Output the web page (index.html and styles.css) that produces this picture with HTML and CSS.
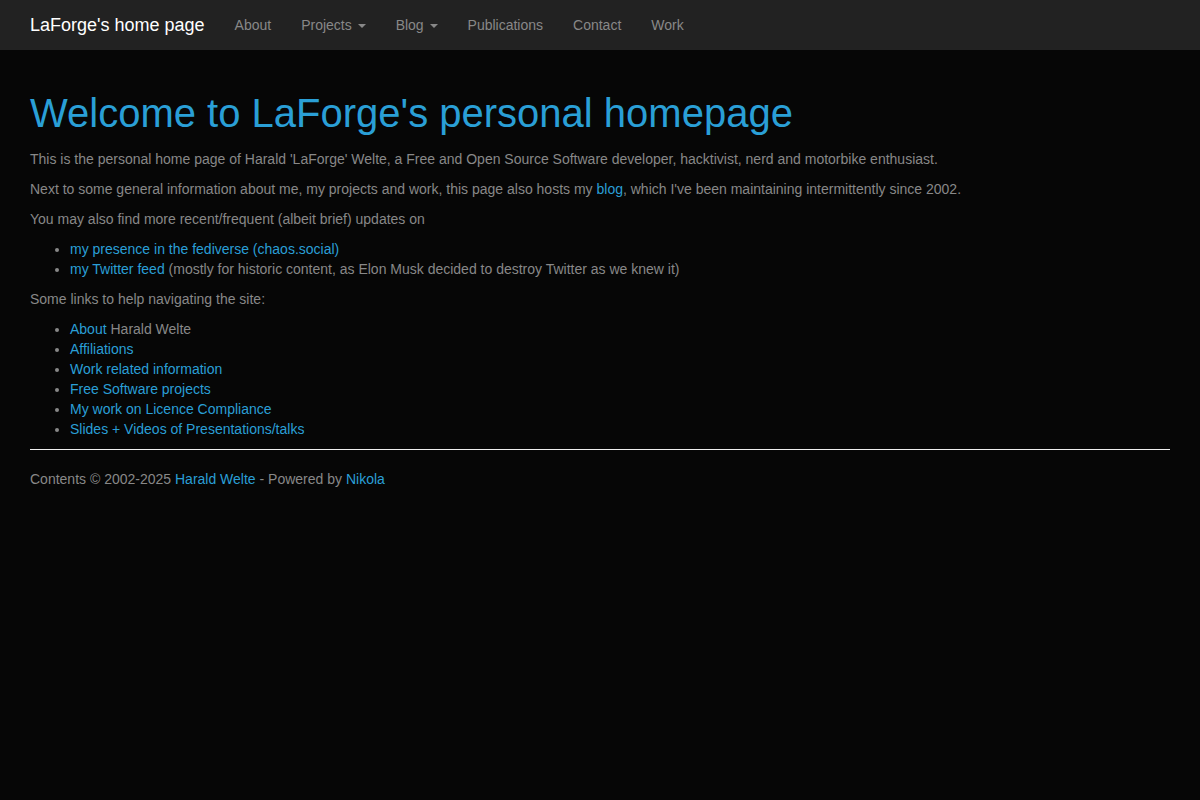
FILE: index.html
```html
<!DOCTYPE html>
<html lang="en">
<head>
    <meta charset="UTF-8">
    <meta name="viewport" content="width=device-width, initial-scale=1.0">
    <title>LaForge's home page</title>
    <link rel="stylesheet" href="styles.css">
</head>
<body>
    <nav class="navbar">
        <div class="navbar-inner">
            <a class="navbar-brand" href="#">LaForge's home page</a>
            <ul class="navbar-nav">
                <li><a href="#">About</a></li>
                <li><a href="#">Projects <span class="caret"></span></a></li>
                <li><a href="#">Blog <span class="caret"></span></a></li>
                <li><a href="#">Publications</a></li>
                <li><a href="#">Contact</a></li>
                <li><a href="#">Work</a></li>
            </ul>
        </div>
    </nav>

    <div class="container">
        <h1 class="page-title">Welcome to LaForge's personal homepage</h1>

        <p>This is the personal home page of Harald 'LaForge' Welte, a Free and Open Source Software developer, hacktivist, nerd and motorbike enthusiast.</p>

        <p>Next to some general information about me, my projects and work, this page also hosts my <a href="#">blog</a>, which I've been maintaining intermittently since 2002.</p>

        <p>You may also find more recent/frequent (albeit brief) updates on</p>
        <ul>
            <li><a href="#">my presence in the fediverse (chaos.social)</a></li>
            <li><a href="#">my Twitter feed</a> (mostly for historic content, as Elon Musk decided to destroy Twitter as we knew it)</li>
        </ul>

        <p>Some links to help navigating the site:</p>
        <ul>
            <li><a href="#">About</a> Harald Welte</li>
            <li><a href="#">Affiliations</a></li>
            <li><a href="#">Work related information</a></li>
            <li><a href="#">Free Software projects</a></li>
            <li><a href="#">My work on Licence Compliance</a></li>
            <li><a href="#">Slides + Videos of Presentations/talks</a></li>
        </ul>

        <footer class="footer">
            <hr>
            <p>Contents &copy; 2002-2025 <a href="#">Harald Welte</a> - Powered by <a href="#">Nikola</a></p>
        </footer>
    </div>
</body>
</html>
```

FILE: styles.css
```css
body {
    font-family: "Liberation Sans", Arial, sans-serif;
    font-size: 14px;
    line-height: 20px;
    margin: 0;
    padding: 0;
    background-color: #060606;
    color: #888;
}

a {
    color: #2a9fd6;
    text-decoration: none;
}

/* top navigation bar */
.navbar {
    background-color: #222;
    height: 50px;
}

.navbar-inner {
    display: flex;
    padding: 0 15px;
}

.navbar-brand {
    color: #fff;
    font-size: 18px;
    line-height: 20px;
    padding: 15px;
}

.navbar-nav {
    display: flex;
    list-style: none;
    margin: 0;
    padding: 0;
}

.navbar-nav a {
    display: block;
    color: #888;
    line-height: 20px;
    padding: 15px;
}

.caret {
    display: inline-block;
    width: 0;
    height: 0;
    margin-left: 2px;
    vertical-align: middle;
    border-top: 4px solid;
    border-left: 4px solid transparent;
    border-right: 4px solid transparent;
}

/* page body */
.container {
    max-width: 1140px;
    margin: 0 auto;
    padding: 0 30px;
}

.page-title {
    color: #2a9fd6;
    font-size: 40px;
    font-weight: normal;
    line-height: 44px;
    margin: 41px 0 14px;
}

p {
    margin: 0 0 10px;
}

ul {
    margin: 0 0 10px;
    padding-left: 40px;
}

.footer hr {
    border: 0;
    border-top: 1px solid #eee;
    margin: 0 0 19px;
}
```
